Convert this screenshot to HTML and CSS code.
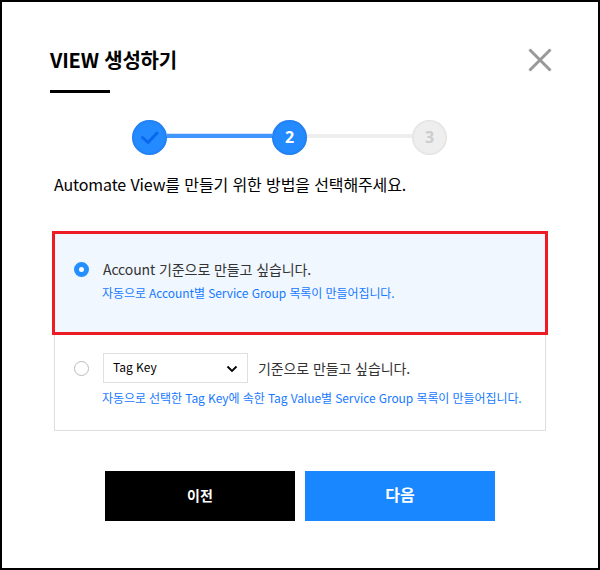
FILE: index.html
```html
<!DOCTYPE html>
<html lang="ko">
<head>
<meta charset="utf-8">
<title>VIEW 생성하기</title>
<link rel="stylesheet" href="styles.css">
</head>
<body>
<main class="dialog">
  <header class="header">
    <h1 class="title">VIEW 생성하기</h1>
    <svg class="close" width="26" height="26" viewBox="0 0 26 26"><path d="M2.500 2.5 23.5 23.5M23.5 2.5 2.5 23.5"/></svg>
  </header>
  <div class="steps">
    <span class="step active"><svg width="19" height="14" viewBox="0 0 19 14"><path d="M2.500 6.5 8 11.5 17 2"/></svg></span>
    <span class="line done"></span>
    <span class="step active">2</span>
    <span class="line"></span>
    <span class="step">3</span>
  </div>
  <p class="lead">Automate View를 만들기 위한 방법을 선택해주세요.</p>
  <section class="options">
    <div class="option selected">
      <span class="radio checked"></span>
      <div class="content">
        <div class="row"><span class="label">Account 기준으로 만들고 싶습니다.</span></div>
        <p class="hint">자동으로 Account별 Service Group 목록이 만들어집니다.</p>
      </div>
    </div>
    <div class="option tag">
      <span class="radio"></span>
      <div class="content">
        <div class="row">
          <div class="select"><span>Tag Key</span><svg width="12" height="8" viewBox="0 0 12 8"><path d="M1.500 1.500 6 6 10.500 1.500"/></svg></div>
          <span class="label">기준으로 만들고 싶습니다.</span>
        </div>
        <p class="hint">자동으로 선택한 Tag Key에 속한 Tag Value별 Service Group 목록이 만들어집니다.</p>
      </div>
    </div>
  </section>
  <footer class="actions">
    <button class="button prev">이전</button>
    <button class="button next">다음</button>
  </footer>
</main>
</body>
</html>
```

FILE: styles.css
```css
* { box-sizing: border-box; }
body, h1, p { margin: 0; }
body { font-family: "Noto Sans CJK KR", sans-serif; color: #000; background: #fff; }
svg { display: block; fill: none; }
.dialog { width: 600px; height: 570px; border: 2px solid #000; padding: 42px 45px 0 48px; overflow: hidden; }
.header { display: flex; justify-content: space-between; height: 49px; }
.title { position: relative; height: 49px; font-size: 20px; line-height: 31px; font-weight: 700; letter-spacing: -.2px; white-space: nowrap; }
.title::after { content: ""; position: absolute; left: 0; bottom: 0; width: 60px; height: 3px; background: #000; }
.close { margin-top: 3px; stroke: #999; stroke-width: 3; }
.steps { display: flex; align-items: center; height: 35px; margin: 27px 0 0 82px; }
.step { display: flex; align-items: center; justify-content: center; width: 35px; height: 35px; border-radius: 50%; background: #eee; color: #ccc; font: 700 16px/35px "Open Sans", sans-serif; box-shadow: inset 0 0 3px rgba(0,0,0,.12); }
.step.active { background: #248aff; color: #fff; box-shadow: inset 0 0 3px rgba(0,60,160,.4); }
.step path { stroke: #0868eb; stroke-width: 3; stroke-linecap: round; stroke-linejoin: round; }
.line { width: 105px; height: 4px; margin-bottom: 3px; background: #eee; }
.line.done { background: #4297ff; box-shadow: 0 -1px #cfe3fa; }
.lead { margin: 16px 0 0 4px; font-size: 16px; line-height: 26px; letter-spacing: -.12px; white-space: nowrap; }
.options { width: 492px; margin: 36px 0 0 4px; }
.option { display: flex; padding-left: 20px; }
.option.selected { height: 100px; padding-top: 25px; background: #f0f7ff; outline: 3px solid #ed1c24; outline-offset: -1px; position: relative; }
.option.tag { height: 98px; padding: 20px 0 0 19px; border: 1px solid #dedede; border-top: 0; }
.radio { flex: none; width: 15px; height: 15px; margin: 4px 14px 0 0; border: 1px solid #bbb; border-radius: 50%; background: #fff; }
.radio.checked { border: 5px solid #248fff; }
.tag .radio { margin-top: 8px; }
.row { display: flex; align-items: center; }
.label { font-size: 14px; line-height: 22px; letter-spacing: -.1px; color: #333; white-space: nowrap; }
.hint { font-size: 12px; line-height: 20px; letter-spacing: -.08px; color: #1779ff; margin: 3px 0 0 -1px; white-space: nowrap; }
.select { display: flex; align-items: center; justify-content: space-between; width: 145px; height: 30px; padding: 0 9px; margin-right: 10px; border: 1px solid #e0e0e0; font-size: 12px; }
.select span { margin-top: -3px; }
.select svg { margin-top: 1px; }
.select path { stroke: #000; stroke-width: 1.8; }
.tag .hint { margin-top: 5px; }
.actions { display: flex; gap: 10px; margin: 40px 0 0 55px; }
.button { width: 190px; height: 50px; padding: 0 0 3px; border: 0; color: #fff; font-family: inherit; font-weight: 700; }
.prev { background: #000; font-size: 14px; }
.next { background: #1987ff; font-size: 16px; padding-bottom: 5px; }
```
